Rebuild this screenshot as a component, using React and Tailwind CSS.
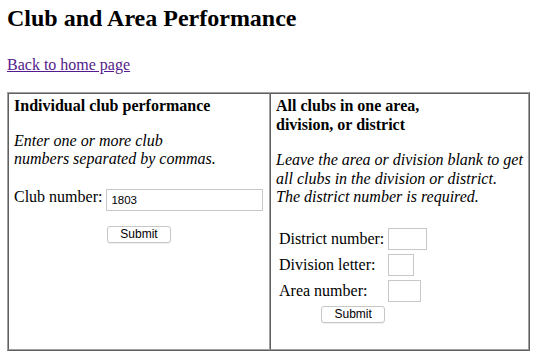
export default function App() {
  return (
    <div className="pl-[7px] bg-white text-black min-h-[362px]" style={{ fontFamily: '"Liberation Serif", "Times New Roman", serif' }}>
      <h1 className="pt-[4px] text-[24px] leading-[28px] font-bold">Club and Area Performance</h1>
      <p className="mt-[23.5px] text-[16px] leading-[18.4px]">
        <a href="#" className="text-[#551A8B] underline">Back to home page</a>
      </p>
      <table className="mt-[18.5px] w-[523px] border-separate border-spacing-0 border border-t-[#a0a0a0] border-l-[#a0a0a0] border-b-[#606060] border-r-[#606060] text-[16px] leading-[18.4px]">
        <tbody>
          <tr>
            <td className="w-[262px] align-top border border-t-[#606060] border-l-[#606060] border-b-[#a0a0a0] border-r-[#a0a0a0] px-[5px] pt-[3px] pb-[5px]">
              <h3 className="font-bold">Individual club performance</h3>
              <p className="mt-[16px] italic">Enter one or more club<br />numbers separated by commas.</p>
              <div className="mt-[19px] flex items-start">
                <span>Club number:</span>
                <input
                  type="text"
                  defaultValue="1803"
                  className="ml-[4px] mt-[1px] h-[22px] w-[157px] border border-[#c8c8c8] px-[4px] text-[11.5px] outline-none"
                  style={{ fontFamily: '"Liberation Sans", Arial, sans-serif' }}
                />
              </div>
              <div className="mt-[15px] flex justify-center">
                <button
                  className="h-[17px] w-[64px] rounded-[3px] border border-[#c6c6c6] bg-white text-[12px] leading-[15px] shadow-[0_1px_0_rgba(0,0,0,0.06)]"
                  style={{ fontFamily: '"Liberation Sans", Arial, sans-serif' }}
                >
                  Submit
                </button>
              </div>
            </td>
            <td className="align-top border border-t-[#606060] border-l-[#606060] border-b-[#a0a0a0] border-r-[#a0a0a0] px-[5px] pt-[3px] pb-[5px]">
              <h3 className="font-bold">All clubs in one area,<br />division, or district</h3>
              <p className="mt-[17px] italic">Leave the area or division blank to get<br />all clubs in the division or district.<br />The district number is required.</p>
              <table className="mt-[19px] mb-[16px] border-separate border-spacing-[2px]">
                <tbody>
                  <tr>
                    <td className="p-[1px] whitespace-nowrap">District number:</td>
                    <td className="p-[1px]">
                      <input type="text" className="block h-[22px] w-[39px] border border-[#c8c8c8] outline-none" />
                    </td>
                  </tr>
                  <tr>
                    <td className="p-[1px] whitespace-nowrap">Division letter:</td>
                    <td className="p-[1px]">
                      <input type="text" className="block h-[22px] w-[26px] border border-[#c8c8c8] outline-none" />
                    </td>
                  </tr>
                  <tr>
                    <td className="p-[1px] whitespace-nowrap">Area number:</td>
                    <td className="p-[1px]">
                      <input type="text" className="block h-[22px] w-[33px] border border-[#c8c8c8] outline-none" />
                    </td>
                  </tr>
                  <tr>
                    <td colSpan={2} className="p-[1px] text-center">
                      <button
                        className="inline-block align-top h-[17px] w-[64px] rounded-[3px] border border-[#c6c6c6] bg-white text-[12px] leading-[15px] shadow-[0_1px_0_rgba(0,0,0,0.06)]"
                        style={{ fontFamily: '"Liberation Sans", Arial, sans-serif' }}
                      >
                        Submit
                      </button>
                    </td>
                  </tr>
                </tbody>
              </table>
            </td>
          </tr>
        </tbody>
      </table>
    </div>
  );
}
